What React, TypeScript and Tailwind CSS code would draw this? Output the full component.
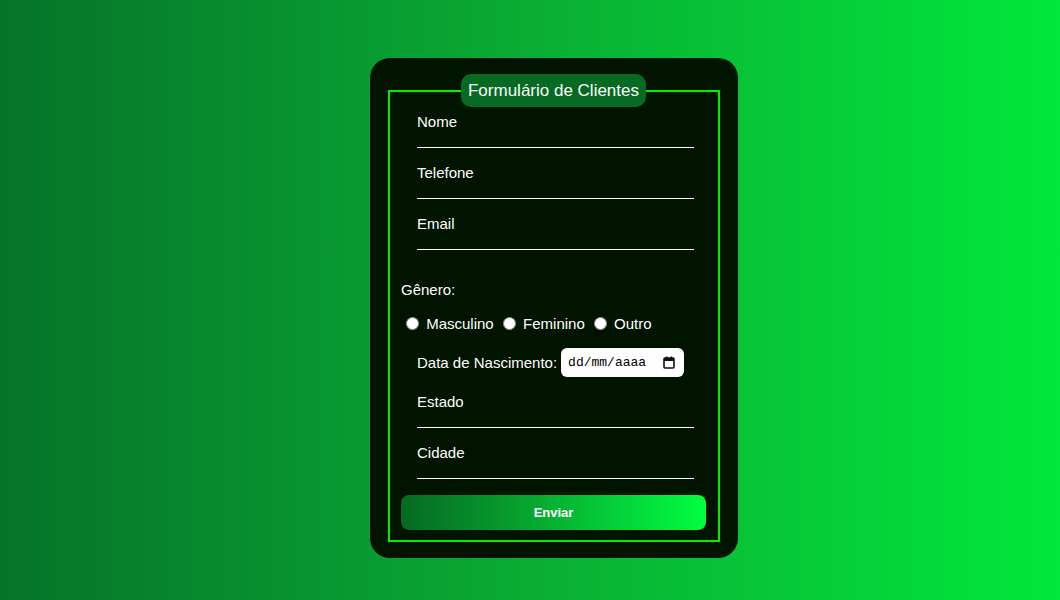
import React, { useState } from 'react';

const campos = ['Nome', 'Telefone', 'Email'];
const campos2 = ['Estado', 'Cidade'];

const Campo: React.FC<{ label: string; value: string; onChange: (v: string) => void }> = ({ label, value, onChange }) => (
  <div className="mb-4 ml-4 w-[277px]">
    <label className="block text-[15px] leading-[18px] text-white">{label}</label>
    <input
      type="text"
      value={value}
      onChange={e => onChange(e.target.value)}
      className="block h-[17px] w-full border-b border-white bg-transparent text-white outline-none"
    />
  </div>
);

const App: React.FC = () => {
  const [dados, setDados] = useState<Record<string, string>>({});
  const [genero, setGenero] = useState('');

  const set = (k: string) => (v: string) => setDados(prev => ({ ...prev, [k]: v }));

  return (
    <div className="min-h-[600px] w-full bg-gradient-to-r from-[#067329] via-[#0aad34] to-[#00e83b] pl-[370px] pt-[58px] font-['Liberation_Sans',Arial,sans-serif]">
      <div className="w-[368px] rounded-[20px] bg-[#001400] px-[18px] pt-4 pb-4">
        <form onSubmit={e => e.preventDefault()}>
          <fieldset className="border-2 border-[#00f000] pl-[11px] pr-3 pt-[6px] pb-[10px]">
            <legend className="mx-auto rounded-[10px] bg-[#066a22] px-[7px] py-[6px] text-[17px] leading-[21px] text-white">
              Formulário de Clientes
            </legend>

            {campos.map(c => (
              <Campo key={c} label={c} value={dados[c] || ''} onChange={set(c)} />
            ))}

            <div className="mt-[31px] text-[15px] leading-[18px] text-white">Gênero:</div>
            <div className="mt-4 mb-[15px] text-[15px] leading-[18px] text-white">
              {['Masculino', 'Feminino', 'Outro'].map(g => (
                <span key={g}>
                  <input
                    type="radio"
                    name="genero"
                    checked={genero === g}
                    onChange={() => setGenero(g)}
                    className="ml-[5px] mr-[3px] align-[-1px]"
                  />{' '}
                  {g}{' '}
                </span>
              ))}
            </div>

            <div className="mb-4 ml-4 flex items-center gap-[4px] text-[15px] leading-[18px] text-white">
              <span>Data de Nascimento:</span>
              <div className="flex h-[29px] w-[123px] items-center justify-between rounded-[6px] bg-white pl-[7px] pr-[9px] font-['Liberation_Mono',monospace] text-[13px] text-black">
                <span>dd/mm/aaaa</span>
                <svg width="12" height="13" viewBox="0 0 12 13" fill="none">
                  <rect x="1" y="2" width="10" height="10" rx="1" stroke="#111" strokeWidth="1.6" />
                  <rect x="1" y="2" width="10" height="3" fill="#111" />
                  <rect x="3" y="0.5" width="1.5" height="2.5" fill="#111" />
                  <rect x="7.5" y="0.5" width="1.5" height="2.5" fill="#111" />
                </svg>
              </div>
            </div>

            {campos2.map(c => (
              <Campo key={c} label={c} value={dados[c] || ''} onChange={set(c)} />
            ))}

            <button
              type="submit"
              className="block h-[35px] w-full rounded-[8px] bg-gradient-to-r from-[#066a22] to-[#00ff40] text-[13px] font-bold text-white"
            >
              Enviar
            </button>
          </fieldset>
        </form>
      </div>
    </div>
  );
};

export default App;
